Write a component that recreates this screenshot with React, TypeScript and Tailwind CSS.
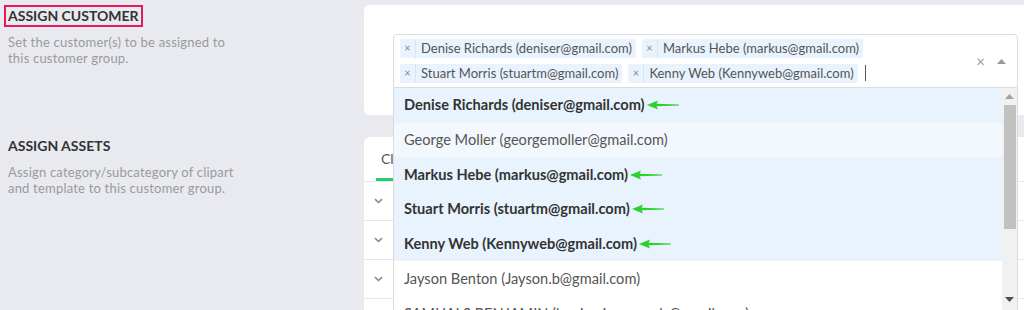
import React from 'react';

const tags = [
  'Denise Richards (deniser@gmail.com)',
  'Markus Hebe (markus@gmail.com)',
  'Stuart Morris (stuartm@gmail.com)',
  'Kenny Web (Kennyweb@gmail.com)',
];

const options = [
  { label: 'Denise Richards (deniser@gmail.com)', selected: true },
  { label: 'George Moller (georgemoller@gmail.com)', focused: true },
  { label: 'Markus Hebe (markus@gmail.com)', selected: true },
  { label: 'Stuart Morris (stuartm@gmail.com)', selected: true },
  { label: 'Kenny Web (Kennyweb@gmail.com)', selected: true },
  { label: 'Jayson Benton (Jayson.b@gmail.com)' },
  { label: 'SAMUALS BENJAMIN (benjamin.samuels@gmail.com)' },
];

const GreenArrow = () => (
  <svg width="32" height="10" viewBox="0 0 32 10" className="ml-[2px] shrink-0">
    <path d="M0 5 L11 0.6 L9.6 3.8 L32 4.4 L32 5.6 L9.6 6.2 L11 9.4 Z" fill="#2bd22b" />
  </svg>
);

const Chevron = () => (
  <svg width="9" height="6" viewBox="0 0 9 6">
    <path d="M1 1.2 L4.5 4.5 L8 1.2" fill="none" stroke="#8a8a8a" strokeWidth="1.6" />
  </svg>
);

const App: React.FC = () => {
  return (
    <div className="h-[310px] w-[1024px] overflow-hidden bg-[#e9eaf0] pt-[3px] font-['Lato',sans-serif]">
      {/* Assign customer */}
      <div className="flex">
        <div className="w-[364px] shrink-0 pl-[4px]">
          <div className="inline-block border-2 border-[#e8185c] px-[2px] text-[14px] leading-[18px] font-bold text-[#333]">
            ASSIGN CUSTOMER
          </div>
          <p className="mt-[7px] pl-[4px] text-[13px] leading-[16px] tracking-[0.2px] text-[#9a9a9a]">
            Set the customer(s) to be assigned to
            <br />
            this customer group.
          </p>
        </div>
        <div className="mt-[2px] flex-1 rounded-l-[6px] bg-white pt-[29px] pr-[6px] pb-[27px] pl-[29px]">
          <div className="relative z-10">
            <div className="flex h-[54px] rounded-t-[4px] border border-[#dcdcdc] bg-white">
              <div className="flex w-[575px] flex-wrap content-start gap-[6px] pt-[4px] pl-[6px]">
                {tags.map((t) => (
                  <div key={t} className="flex h-[19px] items-center rounded-[2px] bg-[#e8f3fe] text-[13px] text-[#555]">
                    <span className="flex h-full w-[16px] items-center justify-center border-r border-[#d3e5f7] text-[11px] text-[#888]">
                      ×
                    </span>
                    <span className="pr-[4px] pl-[5px]">{t}</span>
                  </div>
                ))}
                <div className="mt-[1px] ml-[1px] h-[16px] w-[1px] bg-[#555]" />
              </div>
              <div className="flex flex-1 items-center justify-end gap-[12px] pr-[11px]">
                <span className="text-[15px] leading-none text-[#999]">×</span>
                <svg width="9" height="5" viewBox="0 0 9 5">
                  <path d="M0 5 L4.5 0 L9 5 Z" fill="#999" />
                </svg>
              </div>
            </div>
            {/* dropdown */}
            <div className="absolute top-full right-0 left-0 flex border-x border-b border-[#dcdcdc] bg-white">
              <div className="flex-1">
                {options.map((o) => (
                  <div
                    key={o.label}
                    className={
                      'flex h-[34.7px] items-center pl-[10px] text-[14.6px] ' +
                      (o.selected
                        ? 'bg-[#e8f3fe] font-bold text-[#333]'
                        : o.focused
                          ? 'bg-[#f3f8fe] text-[#555]'
                          : 'bg-white text-[#555]')
                    }
                  >
                    <span>{o.label}</span>
                    {o.selected && <GreenArrow />}
                  </div>
                ))}
              </div>
              <div className="flex w-[15px] flex-col items-center bg-[#f1f1f1]">
                <svg width="9" height="5" viewBox="0 0 9 5" className="mt-[6px]">
                  <path d="M0 5 L4.5 0 L9 5 Z" fill="#a3a3a3" />
                </svg>
                <div className="mt-[6px] h-[124px] w-[12px] bg-[#c1c1c1]" />
                <div className="h-[68px]" />
                <svg width="9" height="5" viewBox="0 0 9 5">
                  <path d="M0 0 L4.5 5 L9 0 Z" fill="#505050" />
                </svg>
              </div>
            </div>
          </div>
        </div>
      </div>

      {/* Assign assets */}
      <div className="mt-[22px] flex">
        <div className="w-[364px] shrink-0 pl-[8px]">
          <div className="text-[14px] leading-[18px] font-bold text-[#333]">ASSIGN ASSETS</div>
          <p className="mt-[9px] text-[13px] leading-[16px] tracking-[0.2px] text-[#9a9a9a]">
            Assign category/subcategory of clipart
            <br />
            and template to this customer group.
          </p>
        </div>
        <div className="flex-1 rounded-l-[6px] bg-white">
          <div className="flex h-[45px] border-b border-[#e6e6e6] pl-[12px]">
            <div className="flex flex-col justify-end">
              <span className="px-[5px] text-[14px] text-[#555]">Clipart</span>
              <div className="mt-[9px] h-[3px] bg-[#2ecc71]" />
            </div>
            <div className="ml-[24px] flex items-end pb-[12px] text-[14px] text-[#555]">Template</div>
          </div>
          {[0, 1, 2, 3].map((i) => (
            <div key={i} className="flex h-[39px] border-b border-[#e6e6e6]">
              <div className="flex w-[30px] items-center justify-center border-r border-[#e6e6e6]">
                <Chevron />
              </div>
              <div className="flex-1" />
            </div>
          ))}
        </div>
      </div>
    </div>
  );
};

export default App;
